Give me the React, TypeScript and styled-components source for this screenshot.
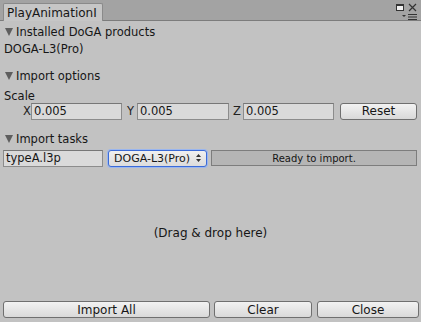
import React from "react";
import styled, { createGlobalStyle } from "styled-components";

const GlobalStyle = createGlobalStyle`
  html, body {
    margin: 0;
    padding: 0;
    background: #c2c2c2;
  }
  body {
    font-family: "DejaVu Sans", Verdana, sans-serif;
    font-size: 11.5px;
    color: #161616;
  }
`;

const Window = styled.div`
  width: 421px;
  height: 322px;
  display: flex;
  flex-direction: column;
  background: #c2c2c2;
  overflow: hidden;
`;

const TitleBar = styled.div`
  height: 21px;
  flex: none;
  display: flex;
  align-items: flex-end;
  justify-content: space-between;
  background: #a3a3a3;
  border-bottom: 1px solid #7c7c7c;
  padding-left: 3px;
  box-sizing: border-box;
`;

const Tab = styled.div`
  height: 17px;
  padding: 0 5px 0 3px;
  display: flex;
  align-items: center;
  background: #c6c6c6;
  border: 1px solid #8a8a8a;
  border-bottom: none;
  border-radius: 2px 2px 0 0;
  margin-bottom: -1px;
  font-size: 12px;
`;

const WindowControls = styled.div`
  display: flex;
  flex-direction: column;
  align-items: flex-end;
  padding: 3px 4px 0 0;
  gap: 2px;
  height: 100%;
  box-sizing: border-box;
`;

const ControlRow = styled.div`
  display: flex;
  align-items: center;
  gap: 4px;
`;

const Body = styled.div`
  flex: 1;
  display: flex;
  flex-direction: column;
  padding: 2px 4px 4px 4px;
`;

const Foldout = styled.div<{ $top?: number }>`
  height: 17px;
  display: flex;
  align-items: center;
  gap: 3px;
  padding-left: 1px;
  margin-top: ${(p) => p.$top ?? 0}px;
`;

const Triangle = styled.span`
  width: 0;
  height: 0;
  border-left: 4px solid transparent;
  border-right: 4px solid transparent;
  border-top: 8px solid #5e5e5e;
`;

const Label = styled.div<{ $top?: number; $h?: number }>`
  height: ${(p) => p.$h ?? 17}px;
  display: flex;
  align-items: center;
  margin-top: ${(p) => p.$top ?? 0}px;
`;

const Row = styled.div<{ $top?: number }>`
  display: flex;
  align-items: center;
  height: 18px;
  margin-top: ${(p) => p.$top ?? 0}px;
`;

const AxisLabel = styled.span<{ $indent: number; $w: number }>`
  width: ${(p) => p.$w}px;
  margin-left: ${(p) => p.$indent}px;
  color: #222;
  flex: none;
`;

const Field = styled.div<{ $w: number; $gap?: number }>`
  width: ${(p) => p.$w}px;
  height: 17px;
  flex: none;
  box-sizing: border-box;
  margin-left: ${(p) => p.$gap ?? 0}px;
  display: flex;
  align-items: center;
  padding-left: 2px;
  background: #dadada;
  border: 1px solid #8c8c8c;
  border-top-color: #777;
`;

const Button = styled.div<{ $w: number; $gap?: number }>`
  width: ${(p) => p.$w}px;
  height: 17px;
  flex: none;
  box-sizing: border-box;
  margin-left: ${(p) => p.$gap ?? 0}px;
  display: flex;
  align-items: center;
  justify-content: center;
  border: 1px solid #6f6f6f;
  border-radius: 3px;
  background: linear-gradient(#f2f2f2, #d9d9d9);
  font-size: 12px;
`;

const Popup = styled.div<{ $w: number; $gap?: number }>`
  width: ${(p) => p.$w}px;
  height: 17px;
  flex: none;
  box-sizing: border-box;
  margin-left: ${(p) => p.$gap ?? 0}px;
  display: flex;
  align-items: center;
  justify-content: space-between;
  padding: 0 5px 0 5px;
  border: 1px solid #3b6bd8;
  border-radius: 3px;
  background: linear-gradient(#f0f0f0, #dcdcdc);
  box-shadow: 0 0 0 1px #9ab6ef;
  font-size: 11px;
`;

const Status = styled.div<{ $gap?: number }>`
  flex: 1;
  height: 16px;
  box-sizing: border-box;
  margin-left: ${(p) => p.$gap ?? 0}px;
  display: flex;
  align-items: center;
  justify-content: center;
  background: #b5b5b5;
  border: 1px solid #7d7d7d;
  font-size: 10px;
`;

const DropZone = styled.div`
  flex: 1;
  display: flex;
  align-items: center;
  justify-content: center;
  font-size: 12px;
  padding-bottom: 2px;
`;

const Footer = styled.div`
  display: flex;
  align-items: center;
  height: 17px;
  margin-left: -1px;
`;

const Maximize = () => (
  <svg width="8" height="7" viewBox="0 0 8 7">
    <rect x="0.5" y="0.5" width="7" height="6" fill="#eee" stroke="#333" />
    <rect x="0" y="0" width="8" height="2" fill="#333" />
  </svg>
);

const CloseX = () => (
  <svg width="9" height="9" viewBox="0 0 9 9">
    <path d="M1 1 L8 8 M8 1 L1 8" stroke="#333" strokeWidth="1.2" />
  </svg>
);

const MenuIcon = () => (
  <svg width="15" height="6" viewBox="0 0 15 6">
    <path d="M0 1 L4 1 L2 3 Z" fill="#333" />
    <rect x="6" y="0" width="9" height="1" fill="#333" />
    <rect x="6" y="2.5" width="9" height="1" fill="#333" />
    <rect x="6" y="5" width="9" height="1" fill="#333" />
  </svg>
);

const UpDown = () => (
  <svg width="5" height="8" viewBox="0 0 5 8">
    <path d="M0 3 L2.5 0 L5 3 Z M0 5 L5 5 L2.5 8 Z" fill="#333" />
  </svg>
);

export default function App() {
  return (
    <>
      <GlobalStyle />
      <Window>
        <TitleBar>
          <Tab>PlayAnimationI</Tab>
          <WindowControls>
            <ControlRow>
              <Maximize />
              <CloseX />
            </ControlRow>
            <MenuIcon />
          </WindowControls>
        </TitleBar>
        <Body>
          <Foldout>
            <Triangle />
            Installed DoGA products
          </Foldout>
          <Label>DOGA-L3(Pro)</Label>
          <Foldout $top={10}>
            <Triangle />
            Import options
          </Foldout>
          <Label $top={5} $h={13}>Scale</Label>
          <Row>
            <AxisLabel $indent={19} $w={8}>X</AxisLabel>
            <Field $w={91}>0.005</Field>
            <AxisLabel $indent={5} $w={10}>Y</AxisLabel>
            <Field $w={92}>0.005</Field>
            <AxisLabel $indent={4} $w={10}>Z</AxisLabel>
            <Field $w={91}>0.005</Field>
            <Button $w={77} $gap={6}>Reset</Button>
          </Row>
          <Foldout $top={10}>
            <Triangle />
            Import tasks
          </Foldout>
          <Row $top={2}>
            <Field $w={100} $gap={-1}>typeA.l3p</Field>
            <Popup $w={99} $gap={5}>
              DOGA-L3(Pro)
              <UpDown />
            </Popup>
            <Status $gap={4}>Ready to import.</Status>
          </Row>
          <DropZone>(Drag &amp; drop here)</DropZone>
          <Footer>
            <Button $w={207}>Import All</Button>
            <Button $w={98} $gap={4}>Clear</Button>
            <Button $w={102} $gap={5}>Close</Button>
          </Footer>
        </Body>
      </Window>
    </>
  );
}
